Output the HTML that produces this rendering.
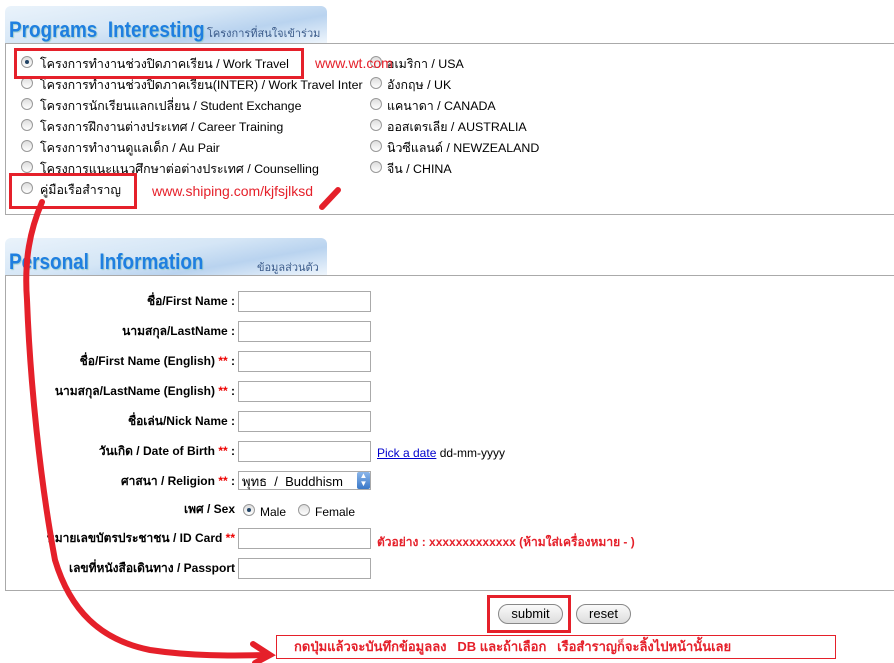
<!DOCTYPE html>
<html><head><meta charset="utf-8"><style>
body{margin:0;width:894px;height:663px;background:#fff;position:relative;overflow:hidden;font-family:"Liberation Sans",sans-serif;font-size:12px;color:#000}
.a{position:absolute;white-space:nowrap}
.p{font-size:12.4px}
.hdr{position:absolute;left:5px;width:322px;height:37px;border-radius:6px 6px 0 0;background:linear-gradient(170deg,#eaf3fb 0%,#d5e6f6 45%,#b9d3ef 70%,#eef5fc 100%)}
.ht{position:absolute;left:4px;top:11px;font:bold 22px "Liberation Sans",sans-serif;color:#1f7fe0;transform:scaleX(0.86);transform-origin:left;white-space:nowrap;text-shadow:1px 1px 1px #9cc}
.hs{position:absolute;font-size:11px;color:#3b5b8a;white-space:nowrap}
.box{position:absolute;left:5px;right:-2px;border:1px solid #aaa}
.r{position:absolute;width:10px;height:10px;border:1px solid #999;border-radius:50%;background:linear-gradient(#ddd,#fff)}
.r.on::after{content:"";position:absolute;left:3px;top:3px;width:4px;height:4px;border-radius:50%;background:#246}
.l{position:absolute;right:659px;font-weight:bold;text-align:right;white-space:nowrap}
.s{color:#e00}
.in{position:absolute;left:238px;width:131px;height:19px;border:1px solid #aaa;background:#fff}
.red{position:absolute;border:3px solid #e5202a}
.btn{position:absolute;height:18px;border:1px solid #888;border-radius:10px;background:linear-gradient(#fafafa,#ddd);text-align:center;line-height:18px;font-size:13px}
</style></head><body>
<div class="hdr" style="top:6px"><div class="ht">Programs&nbsp; Interesting</div><div class="hs" style="left:202px;top:18px">โครงการที่สนใจเข้าร่วม</div></div>
<div class="box" style="top:43px;height:170px"></div>
<div class="r on" style="left:21px;top:56px"></div><div class="a p" style="left:40px;top:55px">โครงการทำงานช่วงปิดภาคเรียน / Work Travel</div>
<div class="r" style="left:21px;top:77px"></div><div class="a p" style="left:40px;top:76px">โครงการทำงานช่วงปิดภาคเรียน(INTER) / Work Travel Inter</div>
<div class="r" style="left:21px;top:98px"></div><div class="a p" style="left:40px;top:97px">โครงการนักเรียนแลกเปลี่ยน / Student Exchange</div>
<div class="r" style="left:21px;top:119px"></div><div class="a p" style="left:40px;top:118px">โครงการฝึกงานต่างประเทศ / Career Training</div>
<div class="r" style="left:21px;top:140px"></div><div class="a p" style="left:40px;top:139px">โครงการทำงานดูแลเด็ก / Au Pair</div>
<div class="r" style="left:21px;top:161px"></div><div class="a p" style="left:40px;top:160px">โครงการแนะแนวศึกษาต่อต่างประเทศ / Counselling</div>
<div class="r" style="left:21px;top:182px"></div><div class="a p" style="left:40px;top:181px">คู่มือเรือสำราญ</div>
<div class="r" style="left:370px;top:56px"></div><div class="a p" style="left:387px;top:55px">อเมริกา / USA</div>
<div class="r" style="left:370px;top:77px"></div><div class="a p" style="left:387px;top:76px">อังกฤษ / UK</div>
<div class="r" style="left:370px;top:98px"></div><div class="a p" style="left:387px;top:97px">แคนาดา / CANADA</div>
<div class="r" style="left:370px;top:119px"></div><div class="a p" style="left:387px;top:118px">ออสเตรเลีย / AUSTRALIA</div>
<div class="r" style="left:370px;top:140px"></div><div class="a p" style="left:387px;top:139px">นิวซีแลนด์ / NEWZEALAND</div>
<div class="r" style="left:370px;top:161px"></div><div class="a p" style="left:387px;top:160px">จีน / CHINA</div>
<div class="a" style="left:315px;top:55px;color:#e5202a;font:14px 'Liberation Sans',sans-serif">www.wt.com</div>
<div class="a" style="left:152px;top:183px;color:#e5202a;font:14px 'Liberation Sans',sans-serif">www.shiping.com/kjfsjlksd</div>
<div class="red" style="left:14px;top:48px;width:284px;height:25px"></div>
<div class="red" style="left:9px;top:173px;width:122px;height:30px"></div>

<div class="hdr" style="top:238px"><div class="ht">Personal&nbsp; Information</div><div class="hs" style="left:252px;top:20px">ข้อมูลส่วนตัว</div></div>
<div class="box" style="top:275px;height:314px"></div>
<div class="l" style="top:292px">ชื่อ/First Name :</div><div class="in" style="top:291px"></div>
<div class="l" style="top:322px">นามสกุล/LastName :</div><div class="in" style="top:321px"></div>
<div class="l" style="top:352px">ชื่อ/First Name (English) <span class="s">**</span> :</div><div class="in" style="top:351px"></div>
<div class="l" style="top:382px">นามสกุล/LastName (English) <span class="s">**</span> :</div><div class="in" style="top:381px"></div>
<div class="l" style="top:412px">ชื่อเล่น/Nick Name :</div><div class="in" style="top:411px"></div>
<div class="l" style="top:442px">วันเกิด / Date of Birth <span class="s">**</span> :</div><div class="in" style="top:441px"></div>
<div class="a" style="left:377px;top:446px"><span style="color:#00c;text-decoration:underline">Pick a date</span> dd-mm-yyyy</div>
<div class="l" style="top:472px">ศาสนา / Religion <span class="s">**</span> :</div>
<div class="in" style="top:471px;font-size:13px;line-height:19px;padding-left:3px;box-sizing:border-box;width:133px;height:19px">พุทธ &nbsp;/ &nbsp;Buddhism<div style="position:absolute;right:0;top:0;width:13px;height:17px;background:linear-gradient(#8bb6ea,#3a78c8);border-radius:2px;color:#fff;font-size:8px;line-height:8px;text-align:center">▲<br>▼</div></div>
<div class="l" style="top:500px">เพศ / Sex</div>
<div class="r on" style="left:243px;top:504px"></div><div class="a" style="left:260px;top:505px">Male</div>
<div class="r" style="left:298px;top:504px"></div><div class="a" style="left:315px;top:505px">Female</div>
<div class="l" style="top:529px">หมายเลขบัตรประชาชน / ID Card <span class="s">**</span></div><div class="in" style="top:528px"></div>
<div class="a" style="left:377px;top:533px;color:#e5202a;font-weight:bold">ตัวอย่าง : xxxxxxxxxxxxx (ห้ามใส่เครื่องหมาย - )</div>
<div class="l" style="top:559px">เลขที่หนังสือเดินทาง / Passport</div><div class="in" style="top:558px"></div>

<div class="btn" style="left:498px;top:604px;width:63px">submit</div>
<div class="btn" style="left:576px;top:604px;width:53px">reset</div>
<div class="red" style="left:487px;top:595px;width:78px;height:32px"></div>
<div class="a" style="left:276px;top:635px;border:1px solid #e5202a;color:#e5202a;font-weight:bold;font-size:13px;line-height:22px;padding-left:17px;box-sizing:border-box;width:560px;height:24px">กดปุ่มแล้วจะบันทึกข้อมูลลง &nbsp; DB และถ้าเลือก &nbsp; เรือสำราญก็จะลิ้งไปหน้านั้นเลย</div>
<svg class="a" style="left:0;top:0" width="894" height="663"><g fill="none" stroke="#e5202a" stroke-width="6" stroke-linecap="round">
<path d="M42 202 C30 230 24 260 27 300 C30 380 40 480 55 560 C70 610 100 640 150 650 C190 656 230 656 268 655"/>
<path d="M253 644 L270 655 L255 663"/>
<path d="M322 207 L338 190"/></g></svg>
</body></html>
